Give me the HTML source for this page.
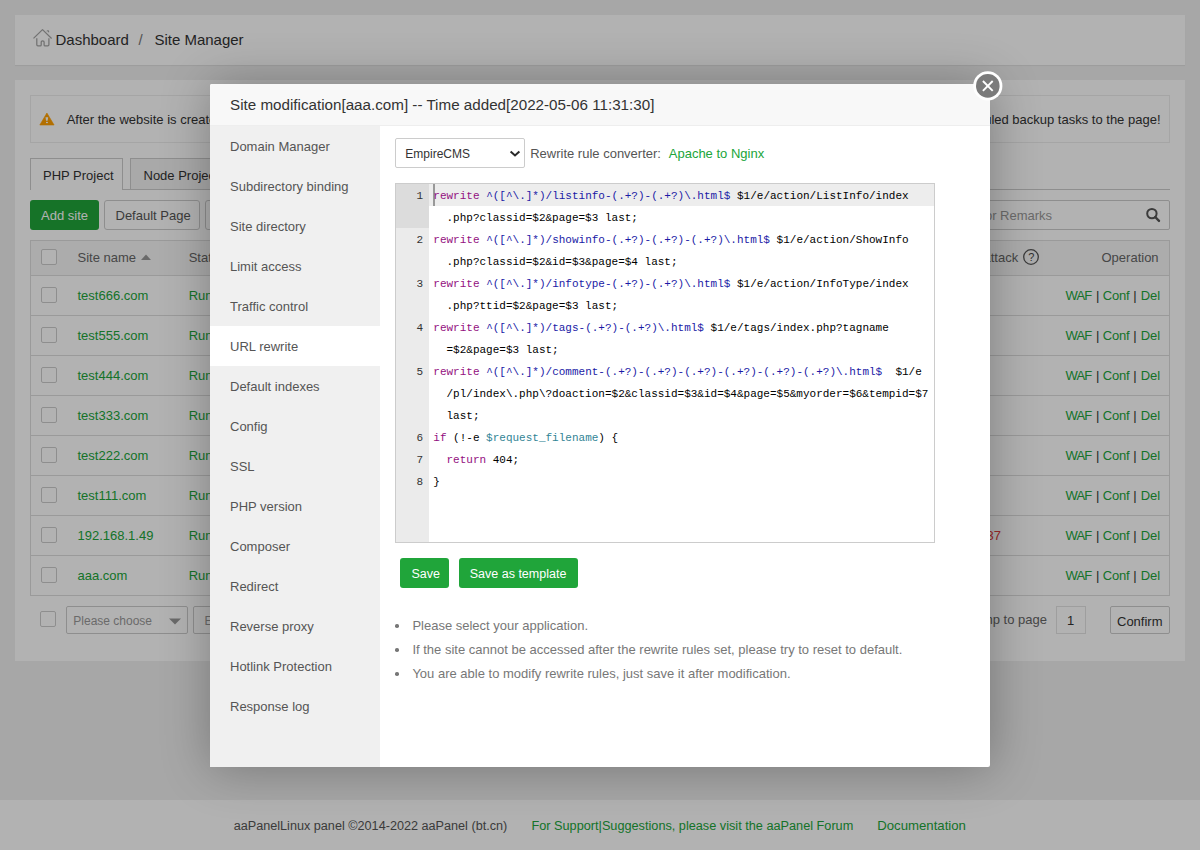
<!DOCTYPE html>
<html><head><meta charset="utf-8">
<style>
*{margin:0;padding:0;box-sizing:border-box}
html,body{width:1200px;height:850px;overflow:hidden}
body{background:#f0f0f0;font-family:"Liberation Sans",sans-serif;color:#333;position:relative;font-size:13px}
.abs{position:absolute}
.box{position:absolute;background:#fff}
.txt{position:absolute;white-space:pre;line-height:20px}
.green{color:#20a53a}
.cb{position:absolute;width:16px;height:16px;border:1px solid #ccc;border-radius:2px;background:#fff}
.row{position:absolute;left:30px;width:1140px;height:40px;border-top:1px solid #ddd}
.shade{position:absolute;left:0;top:0;width:1200px;height:850px;background:rgba(0,0,0,.3)}
.layer{position:absolute;left:210px;top:84px;width:780px;height:683px;background:#fff;box-shadow:1px 1px 50px rgba(0,0,0,.3);border-radius:2px}
.title{position:absolute;left:0;top:0;width:780px;height:42px;background:#f8f8f8;border-bottom:1px solid #eee;border-radius:2px 2px 0 0;font-size:15.2px;line-height:42px;padding-left:20px;color:#333;white-space:pre}
.menu{position:absolute;left:0;top:42px;width:170px;height:641px;background:#f0f0f0}
.menu div{height:40px;line-height:40px;padding-top:1px;padding-left:20px;font-size:13px;color:#555;white-space:pre}
.menu div.on{background:#fff}
.code{position:absolute;font-family:"Liberation Mono",monospace;font-size:11px;line-height:22px;white-space:pre;color:#000}
.kw{color:rgb(147,15,128)}
.rx{color:#1a1aa6}
.vr{color:rgb(49,132,149)}
</style></head><body>

<!-- breadcrumb -->
<div class="box" style="left:15px;top:15px;width:1170px;height:50px;box-shadow:0 1px 1px rgba(0,0,0,.06)"></div>
<svg class="abs" style="left:30px;top:26px" width="26" height="24" viewBox="30 26 26 24">
<path d="M33.5 38.4 L42.5 29.6 L51.6 38.5 M36.8 38.2 V44.8 Q36.8 45.9 37.9 45.9 H40.2 Q41.2 45.9 41.2 44.9 V42 Q41.2 40.9 42.6 40.9 Q44.1 40.9 44.1 42 V44.9 Q44.1 45.9 45.1 45.9 H47.8 Q48.9 45.9 48.9 44.8 V38.2" fill="none" stroke="#a3a3a3" stroke-width="1.25" stroke-linejoin="round"/>
<path d="M46.9 31.4 Q47.3 30.5 48.2 30.8 Q48.9 31.2 48.6 32.3" fill="none" stroke="#a3a3a3" stroke-width="1.1"/>
</svg>
<div class="txt" style="left:55.5px;top:30px;font-size:15px;color:#333">Dashboard</div>
<div class="txt" style="left:138.5px;top:30px;font-size:15px;color:#777">/</div>
<div class="txt" style="left:154.4px;top:30px;font-size:15px;color:#333">Site Manager</div>

<!-- main box -->
<div class="box" style="left:15px;top:80px;width:1170px;height:581px"></div>
<!-- alert -->
<div class="abs" style="left:30px;top:95px;width:1140px;height:48px;border:1px solid #ececec;background:#fff"></div>
<svg class="abs" style="left:38px;top:111px" width="18" height="16" viewBox="38 111 18 16">
<path d="M46.9 113 L54.1 125 H39.8 Z" fill="#ffa000" stroke="#ffa000" stroke-width="0.6" stroke-linejoin="round"/>
<path d="M45.5 117.3 H48.2 L47.6 120.8 H46.1 Z" fill="#fff"/><rect x="46" y="121.9" width="1.9" height="1.2" fill="#fff"/>
</svg>
<div class="txt" style="left:66.7px;top:110px;color:#333">After the website is created successfully, you can</div><div class="txt" style="right:39.5px;top:110px;color:#333">add scheduled backup tasks to the page!</div>

<!-- tabs -->
<div class="abs" style="left:30px;top:189px;width:1140px;height:1px;background:#ccc"></div>
<div class="abs" style="left:30px;top:158px;width:93px;height:32px;border:1px solid #ccc;border-bottom:none;background:#fff"></div>
<div class="txt" style="left:43px;top:166px;color:#333">PHP Project</div>
<div class="abs" style="left:130px;top:158px;width:100px;height:31px;border:1px solid #ccc;border-bottom:none;background:#f2f2f2"></div>
<div class="txt" style="left:143.5px;top:166px;color:#333">Node Project</div>

<!-- buttons -->
<div class="abs" style="left:30px;top:200px;width:69px;height:30px;background:#20a53a;border-radius:3px"></div>
<div class="txt" style="left:41px;top:206px;color:#fff">Add site</div>
<div class="abs" style="left:104px;top:200px;width:96px;height:30px;border:1px solid #ccc;background:#fff;border-radius:3px"></div>
<div class="txt" style="left:115.5px;top:206px;color:#555">Default Page</div>
<div class="abs" style="left:205px;top:200px;width:95px;height:30px;border:1px solid #ccc;background:#fff;border-radius:3px"></div>
<!-- search -->
<div class="abs" style="left:930px;top:200px;width:240px;height:30px;border:1px solid #ccc;background:#fff;border-radius:2px"></div>
<div class="txt" style="left:936.5px;top:206px;color:#999">Domain or Remarks</div>
<svg class="abs" style="left:1144px;top:207px" width="18" height="18" viewBox="0 0 18 18">
<circle cx="7.9" cy="6.6" r="4.7" fill="none" stroke="#555" stroke-width="2"/><path d="M11.2 10 L15 13.9" stroke="#555" stroke-width="2.4" stroke-linecap="round"/>
</svg>

<!-- table -->
<div class="abs" style="left:30px;top:240px;width:1140px;height:356px;border:1px solid #ddd;background:#fff"></div>
<div class="abs" style="left:31px;top:241px;width:1138px;height:34px;background:#f6f6f6"></div>
<div class="cb" style="left:41px;top:249px"></div>
<div class="txt" style="left:77.5px;top:248px;color:#666">Site name</div>
<svg class="abs" style="left:140px;top:253px" width="12" height="8"><path d="M1 7 L6 1.5 L11 7 Z" fill="#999"/></svg>
<div class="txt" style="left:188.7px;top:248px;color:#666">Status</div>
<div class="txt" style="left:951.5px;top:248px;color:#666">WAF attack</div>
<svg class="abs" style="left:1022px;top:249px" width="18" height="18" viewBox="0 0 18 18"><circle cx="9" cy="8" r="7.3" fill="none" stroke="#555" stroke-width="1.3"/><text x="9.2" y="12" text-anchor="middle" font-family="Liberation Sans" font-size="11" fill="#444">?</text></svg>
<div class="txt" style="left:1101.5px;top:248px;color:#666">Operation</div>

<div class="row" style="top:275px"></div>
<div class="cb" style="left:41px;top:287px"></div>
<div class="txt green" style="left:77.5px;top:286px">test666.com</div>
<div class="txt green" style="left:188.7px;top:286px">Running</div>
<div class="txt green" style="letter-spacing:-0.8px;left:1065.5px;top:286px">WAF</div><div class="txt" style="left:1096px;top:286px;color:#333">|</div><div class="txt green" style="left:1102.7px;top:286px;letter-spacing:-0.2px">Conf</div><div class="txt" style="left:1133.3px;top:286px;color:#333">|</div><div class="txt green" style="left:1140.7px;top:286px">Del</div>
<div class="row" style="top:315px"></div>
<div class="cb" style="left:41px;top:327px"></div>
<div class="txt green" style="left:77.5px;top:326px">test555.com</div>
<div class="txt green" style="left:188.7px;top:326px">Running</div>
<div class="txt green" style="letter-spacing:-0.8px;left:1065.5px;top:326px">WAF</div><div class="txt" style="left:1096px;top:326px;color:#333">|</div><div class="txt green" style="left:1102.7px;top:326px;letter-spacing:-0.2px">Conf</div><div class="txt" style="left:1133.3px;top:326px;color:#333">|</div><div class="txt green" style="left:1140.7px;top:326px">Del</div>
<div class="row" style="top:355px"></div>
<div class="cb" style="left:41px;top:367px"></div>
<div class="txt green" style="left:77.5px;top:366px">test444.com</div>
<div class="txt green" style="left:188.7px;top:366px">Running</div>
<div class="txt green" style="letter-spacing:-0.8px;left:1065.5px;top:366px">WAF</div><div class="txt" style="left:1096px;top:366px;color:#333">|</div><div class="txt green" style="left:1102.7px;top:366px;letter-spacing:-0.2px">Conf</div><div class="txt" style="left:1133.3px;top:366px;color:#333">|</div><div class="txt green" style="left:1140.7px;top:366px">Del</div>
<div class="row" style="top:395px"></div>
<div class="cb" style="left:41px;top:407px"></div>
<div class="txt green" style="left:77.5px;top:406px">test333.com</div>
<div class="txt green" style="left:188.7px;top:406px">Running</div>
<div class="txt green" style="letter-spacing:-0.8px;left:1065.5px;top:406px">WAF</div><div class="txt" style="left:1096px;top:406px;color:#333">|</div><div class="txt green" style="left:1102.7px;top:406px;letter-spacing:-0.2px">Conf</div><div class="txt" style="left:1133.3px;top:406px;color:#333">|</div><div class="txt green" style="left:1140.7px;top:406px">Del</div>
<div class="row" style="top:435px"></div>
<div class="cb" style="left:41px;top:447px"></div>
<div class="txt green" style="left:77.5px;top:446px">test222.com</div>
<div class="txt green" style="left:188.7px;top:446px">Running</div>
<div class="txt green" style="letter-spacing:-0.8px;left:1065.5px;top:446px">WAF</div><div class="txt" style="left:1096px;top:446px;color:#333">|</div><div class="txt green" style="left:1102.7px;top:446px;letter-spacing:-0.2px">Conf</div><div class="txt" style="left:1133.3px;top:446px;color:#333">|</div><div class="txt green" style="left:1140.7px;top:446px">Del</div>
<div class="row" style="top:475px"></div>
<div class="cb" style="left:41px;top:487px"></div>
<div class="txt green" style="left:77.5px;top:486px">test111.com</div>
<div class="txt green" style="left:188.7px;top:486px">Running</div>
<div class="txt green" style="letter-spacing:-0.8px;left:1065.5px;top:486px">WAF</div><div class="txt" style="left:1096px;top:486px;color:#333">|</div><div class="txt green" style="left:1102.7px;top:486px;letter-spacing:-0.2px">Conf</div><div class="txt" style="left:1133.3px;top:486px;color:#333">|</div><div class="txt green" style="left:1140.7px;top:486px">Del</div>
<div class="row" style="top:515px"></div>
<div class="cb" style="left:41px;top:527px"></div>
<div class="txt green" style="left:77.5px;top:526px">192.168.1.49</div>
<div class="txt green" style="left:188.7px;top:526px">Running</div>
<div class="txt" style="left:986.5px;top:526px;color:#e23b3b">37</div>
<div class="txt green" style="letter-spacing:-0.8px;left:1065.5px;top:526px">WAF</div><div class="txt" style="left:1096px;top:526px;color:#333">|</div><div class="txt green" style="left:1102.7px;top:526px;letter-spacing:-0.2px">Conf</div><div class="txt" style="left:1133.3px;top:526px;color:#333">|</div><div class="txt green" style="left:1140.7px;top:526px">Del</div>
<div class="row" style="top:555px"></div>
<div class="cb" style="left:41px;top:567px"></div>
<div class="txt green" style="left:77.5px;top:566px">aaa.com</div>
<div class="txt green" style="left:188.7px;top:566px">Running</div>
<div class="txt green" style="letter-spacing:-0.8px;left:1065.5px;top:566px">WAF</div><div class="txt" style="left:1096px;top:566px;color:#333">|</div><div class="txt green" style="left:1102.7px;top:566px;letter-spacing:-0.2px">Conf</div><div class="txt" style="left:1133.3px;top:566px;color:#333">|</div><div class="txt green" style="left:1140.7px;top:566px">Del</div>

<!-- pagination -->
<div class="cb" style="left:40px;top:611px"></div>
<div class="abs" style="left:66px;top:606px;width:122px;height:28px;border:1px solid #ccc;background:#fff;border-radius:2px"></div>
<div class="txt" style="left:73.3px;top:611px;color:#999;font-size:12px">Please choose</div>
<svg class="abs" style="left:168px;top:617px" width="14" height="9"><path d="M1 1.5 H13 L7 7.5 Z" fill="#999"/></svg>
<div class="abs" style="left:193px;top:606px;width:80px;height:28px;border:1px solid #ccc;background:#fff;border-radius:2px"></div><div class="txt" style="left:204.5px;top:611px;color:#999;font-size:12px">Execute</div>
<div class="txt" style="left:968.2px;top:610px;color:#666">Jump to page</div>
<div class="abs" style="left:1056px;top:606px;width:30px;height:28px;border:1px solid #e3e3e3;background:#fff"></div>
<div class="txt" style="left:1067px;top:611px;color:#333">1</div>
<div class="abs" style="left:1110px;top:606px;width:60px;height:28px;border:1px solid #ccc;background:#fff;border-radius:2px"></div>
<div class="txt" style="left:1117px;top:612px;color:#333">Confirm</div>

<!-- footer -->
<div class="box" style="left:0;top:800px;width:1200px;height:50px"></div>
<div class="txt" style="left:233.7px;top:816px;color:#555;font-size:12.65px">aaPanelLinux panel ©2014-2022 aaPanel (bt.cn)</div>
<div class="txt green" style="left:531.5px;top:816px;font-size:12.71px">For Support|Suggestions, please visit the aaPanel Forum</div>
<div class="txt green" style="left:877.2px;top:816px;font-size:13.2px">Documentation</div>

<div class="shade"></div>

<!-- modal -->
<div class="layer">
  <div class="title">Site modification[aaa.com] -- Time added[2022-05-06 11:31:30]</div>
  <div class="menu">
    <div>Domain Manager</div><div>Subdirectory binding</div><div>Site directory</div><div>Limit access</div><div>Traffic control</div><div class="on">URL rewrite</div><div>Default indexes</div><div>Config</div><div>SSL</div><div>PHP version</div><div>Composer</div><div>Redirect</div><div>Reverse proxy</div><div>Hotlink Protection</div><div>Response log</div>
  </div>
  <div class="abs" style="left:185px;top:54px;width:130px;height:30px;border:1px solid #ccc;border-radius:2px;background:#fff"></div>
<div class="txt" style="left:195.3px;top:60px;color:#333;font-size:12px">EmpireCMS</div>
<svg class="abs" style="left:299px;top:66px" width="12" height="9" viewBox="0 0 12 9"><path d="M1.6 1.4 L6 5.5 L10.4 1.4" fill="none" stroke="#2a2a2a" stroke-width="2"/></svg>
<div class="txt" style="left:320.2px;top:60px;color:#555">Rewrite rule converter:</div>
<div class="txt green" style="left:458.75px;top:60px">Apache to Nginx</div>
<div class="abs" style="left:185px;top:99px;width:540px;height:360px;border:1px solid #ccc;background:#fff"></div>
<div class="abs" style="left:186px;top:100px;width:33px;height:358px;background:#ebebeb"></div>
<div class="abs" style="left:186px;top:100px;width:33px;height:44px;background:#dcdcdc"></div>
<div class="abs" style="left:219px;top:100px;width:505px;height:22px;background:rgba(0,0,0,.07)"></div>
<div class="abs" style="left:223px;top:100px;width:2px;height:22px;background:#999"></div>
<div class="code" style="left:223.3px;top:101px"><span class="kw">rewrite</span> <span class="rx">^([^\.]*)/listinfo-(.+?)-(.+?)\.html$</span> $1/e/action/ListInfo/index</div>
<div class="code" style="left:186px;top:101px;width:27px;text-align:right;color:#333">1</div>
<div class="code" style="left:223.3px;top:123px">  .php?classid=$2&amp;page=$3 last;</div>
<div class="code" style="left:223.3px;top:145px"><span class="kw">rewrite</span> <span class="rx">^([^\.]*)/showinfo-(.+?)-(.+?)-(.+?)\.html$</span> $1/e/action/ShowInfo</div>
<div class="code" style="left:186px;top:145px;width:27px;text-align:right;color:#333">2</div>
<div class="code" style="left:223.3px;top:167px">  .php?classid=$2&amp;id=$3&amp;page=$4 last;</div>
<div class="code" style="left:223.3px;top:189px"><span class="kw">rewrite</span> <span class="rx">^([^\.]*)/infotype-(.+?)-(.+?)\.html$</span> $1/e/action/InfoType/index</div>
<div class="code" style="left:186px;top:189px;width:27px;text-align:right;color:#333">3</div>
<div class="code" style="left:223.3px;top:211px">  .php?ttid=$2&amp;page=$3 last;</div>
<div class="code" style="left:223.3px;top:233px"><span class="kw">rewrite</span> <span class="rx">^([^\.]*)/tags-(.+?)-(.+?)\.html$</span> $1/e/tags/index.php?tagname</div>
<div class="code" style="left:186px;top:233px;width:27px;text-align:right;color:#333">4</div>
<div class="code" style="left:223.3px;top:255px">  =$2&amp;page=$3 last;</div>
<div class="code" style="left:223.3px;top:277px"><span class="kw">rewrite</span> <span class="rx">^([^\.]*)/comment-(.+?)-(.+?)-(.+?)-(.+?)-(.+?)-(.+?)\.html$</span>  $1/e</div>
<div class="code" style="left:186px;top:277px;width:27px;text-align:right;color:#333">5</div>
<div class="code" style="left:223.3px;top:299px">  /pl/index\.php\?doaction=$2&amp;classid=$3&amp;id=$4&amp;page=$5&amp;myorder=$6&amp;tempid=$7</div>
<div class="code" style="left:223.3px;top:321px">  last;</div>
<div class="code" style="left:223.3px;top:343px"><span class="kw">if</span> (!-e <span class="vr">$request_filename</span>) {</div>
<div class="code" style="left:186px;top:343px;width:27px;text-align:right;color:#333">6</div>
<div class="code" style="left:223.3px;top:365px">  <span class="kw">return</span> 404;</div>
<div class="code" style="left:186px;top:365px;width:27px;text-align:right;color:#333">7</div>
<div class="code" style="left:223.3px;top:387px">}</div>
<div class="code" style="left:186px;top:387px;width:27px;text-align:right;color:#333">8</div>
<div class="abs" style="left:190px;top:474px;width:49px;height:30px;background:#20a53a;border-radius:3px"></div>
<div class="txt" style="left:201.5px;top:480px;color:#fff;font-size:12.5px">Save</div>
<div class="abs" style="left:249px;top:474px;width:119px;height:30px;background:#20a53a;border-radius:3px"></div>
<div class="txt" style="left:259.75px;top:480px;color:#fff;font-size:12.5px">Save as template</div>
<div class="abs" style="left:185.3px;top:540.25px;width:3.5px;height:3.5px;border-radius:50%;background:#777"></div>
<div class="txt" style="left:202.39999999999998px;top:532px;color:#777">Please select your application.</div>
<div class="abs" style="left:185.3px;top:564.25px;width:3.5px;height:3.5px;border-radius:50%;background:#777"></div>
<div class="txt" style="left:202.39999999999998px;top:556px;color:#777">If the site cannot be accessed after the rewrite rules set, please try to reset to default.</div>
<div class="abs" style="left:185.3px;top:588.25px;width:3.5px;height:3.5px;border-radius:50%;background:#777"></div>
<div class="txt" style="left:202.39999999999998px;top:580px;color:#777">You are able to modify rewrite rules, just save it after modification.</div>
</div>
<svg class="abs" style="left:970px;top:68px" width="36" height="36" viewBox="970 68 36 36"><circle cx="987.8" cy="85.9" r="14.6" fill="#fff"/><circle cx="987.8" cy="85.9" r="11.8" fill="#7b7b7b"/><path d="M982.9 81 L992.7 90.8 M992.7 81 L982.9 90.8" stroke="#fff" stroke-width="1.9"/></svg>

</body></html>
